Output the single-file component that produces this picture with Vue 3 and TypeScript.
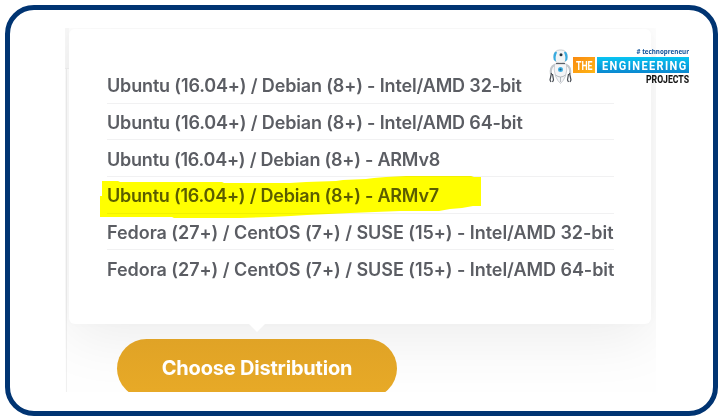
<script setup lang="ts">
interface Distribution {
  label: string
  fit: string
  marked?: boolean
}

const distributions: Distribution[] = [
  { label: 'Ubuntu (16.04+) / Debian (8+) - Intel/AMD 32-bit', fit: 'intel' },
  { label: 'Ubuntu (16.04+) / Debian (8+) - Intel/AMD 64-bit', fit: 'intel' },
  { label: 'Ubuntu (16.04+) / Debian (8+) - ARMv8', fit: 'arm' },
  { label: 'Ubuntu (16.04+) / Debian (8+) - ARMv7', fit: 'arm', marked: true },
  { label: 'Fedora (27+) / CentOS (7+) / SUSE (15+) - Intel/AMD 32-bit', fit: 'fedora' },
  { label: 'Fedora (27+) / CentOS (7+) / SUSE (15+) - Intel/AMD 64-bit', fit: 'fedora' },
]
</script>

<template>
  <main class="frame">
    <section class="capture">
      <div class="panel">
        <ul class="list">
          <li v-for="item in distributions" :key="item.label" class="item">
            <span :class="['label', item.fit]">{{ item.label }}</span>
            <svg v-if="item.marked" class="marker" width="382" height="44" viewBox="0 0 382 44">
              <path
                d="M2 6H18L20 7H122L124 8H190L206 7L236 6L243 5L266 4L274 3L286 2L306 1H371L374 2H381V31H373L362 33L350 34L339 36H300L250 38L207 40L191 41L170 42L140 43H74L72 42H0V21H2Z"
                fill="#ffff00"
              />
            </svg>
          </li>
        </ul>
      </div>
      <button class="choose" type="button">Choose Distribution</button>
    </section>

    <svg class="logo" width="144" height="40" viewBox="0 0 144 40">
      <defs>
        <linearGradient id="blue" x1="0" y1="0" x2="0" y2="1">
          <stop offset="0" stop-color="#08c4f2" />
          <stop offset="1" stop-color="#0a88d0" />
        </linearGradient>
        <linearGradient id="orange" x1="0" y1="0" x2="1" y2="1">
          <stop offset="0" stop-color="#f98a10" />
          <stop offset="1" stop-color="#ffb514" />
        </linearGradient>
      </defs>
      <g>
        <path d="M5.500 16Q1 18 2 25M17.500 16Q22 18 21 25" fill="none" stroke="#c3c7cb" stroke-width="2.200" />
        <path d="M2.500 24L1 31L2 33M3.500 25L4.500 31L3.500 33M20.500 24L22 31L21 33M19.500 25L18.500 31L19.500 33" fill="none" stroke="#484d54" stroke-width="1.200" />
        <path d="M5.500 15H17.500Q18.500 21 16.500 27Q14.500 32 11.500 34.500Q8.500 32 6.500 27Q4.500 21 5.500 15Z" fill="#f4f5f7" stroke="#b8bcc1" stroke-width=".7" />
        <path d="M6.500 26Q11.500 30 16.500 26M11.500 28V33" fill="none" stroke="#a4a9ae" stroke-width=".8" />
        <rect x="5" y="1" width="13" height="13" rx="5.500" fill="#f2f4f5" stroke="#a9afb5" stroke-width=".6" />
        <path d="M7 2.500Q3.500 4 4.800 11L7 12.500Q6 7 8 3.500ZM16 2.500Q19.500 4 18.200 11L16 12.500Q17 7 15 3.500Z" fill="#37abe0" />
        <circle cx="12" cy="5.800" r="1.500" fill="#25333e" />
        <circle cx="11.500" cy="20.500" r="2.500" fill="#43b3e5" />
        <circle cx="11.500" cy="20.500" r="1.100" fill="#205d84" />
        <path d="M7 14.500H16" stroke="#5c6268" stroke-width="1" />
      </g>
      <rect x="24" y="8" width="22" height="16" fill="url(#orange)" />
      <rect x="48" y="8" width="92" height="16" fill="url(#blue)" />
      <text x="27" y="20.500" class="word" font-size="13" textLength="16.500" lengthAdjust="spacingAndGlyphs">THE</text>
      <g transform="translate(53 20.500) scale(.86 1)">
        <text class="word" font-size="12.800" textLength="98" lengthAdjust="spacing">ENGINEERING</text>
      </g>
      <text x="97" y="33.800" class="projects" textLength="43" lengthAdjust="spacingAndGlyphs">PROJECTS</text>
      <text x="87.500" y="5" class="tagline" textLength="52.500" lengthAdjust="spacingAndGlyphs"># technopreneur</text>
    </svg>
  </main>
</template>

<style>
body {
  background: #fff;
}
</style>

<style scoped>
.frame {
  box-sizing: border-box;
  position: relative;
  width: 713px;
  height: 411px;
  margin: 5px 0 0 5px;
  padding: 18px 0 0 55px;
  border: 5px solid #003472;
  border-radius: 29px;
  font-family: "Inter", "Liberation Sans", sans-serif;
}

.capture {
  box-sizing: border-box;
  width: 591px;
  height: 364px;
  padding: 1px 5px 0 4px;
  overflow: hidden;
  background:
    linear-gradient(#f8f8f8, #f8f8f8) 0 0 / 4px 40px no-repeat,
    linear-gradient(#f0f0f0, #f0f0f0) 0 40px / 4px 1px no-repeat,
    linear-gradient(#f0f0f0, #f0f0f0) 1px 41px / 1px 100% no-repeat,
    #fefefe;
}

.panel {
  box-sizing: border-box;
  position: relative;
  width: 582px;
  height: 295px;
  padding: 38px 37px 0 38px;
  border-radius: 6px;
  background: #fff;
  box-shadow: 0 0 10px rgba(0, 0, 0, 0.015), 0 12px 60px rgba(0, 0, 0, 0.075);
}

.panel::after {
  content: "";
  position: absolute;
  left: 180px;
  top: 295px;
  border: 8px solid transparent;
  border-top-color: #fff;
  border-bottom: 0;
}

.list {
  margin: 0;
  padding: 0;
  list-style: none;
}

.item {
  box-sizing: border-box;
  position: relative;
  display: flex;
  align-items: center;
  height: 36.700px;
  padding-top: 3px;
  border-bottom: 1px solid #f1f1f2;
}

.item:last-child {
  border-bottom-color: transparent;
}

.label {
  color: #5b5d63;
  font-size: 18px;
  font-weight: 600;
  line-height: 24px;
  white-space: nowrap;
}

.intel {
  letter-spacing: -0.150px;
}

.arm {
  letter-spacing: -0.220px;
}

.fedora {
  letter-spacing: -0.050px;
}

.marker {
  position: absolute;
  left: -7px;
  top: -2px;
  z-index: 1;
  mix-blend-mode: multiply;
}

.choose {
  display: block;
  position: relative;
  width: 280px;
  height: 59px;
  margin: 15px 0 0 48px;
  padding: 0;
  border: 0;
  border-radius: 30px;
  background: linear-gradient(#e0a326, #e8aa27);
  color: #fff;
  font: 700 20px/59px "Inter", "Liberation Sans", sans-serif;
  letter-spacing: -0.200px;
}

.logo {
  position: absolute;
  left: 539px;
  top: 39px;
  overflow: visible;
}

.word {
  fill: #fff;
  font-family: "Roboto", sans-serif;
  font-weight: 700;
}

.projects {
  fill: #151515;
  font: 800 10px "Roboto", sans-serif;
}

.tagline {
  fill: #0c4f98;
  font: 700 7.500px "Open Sans", sans-serif;
}
</style>
